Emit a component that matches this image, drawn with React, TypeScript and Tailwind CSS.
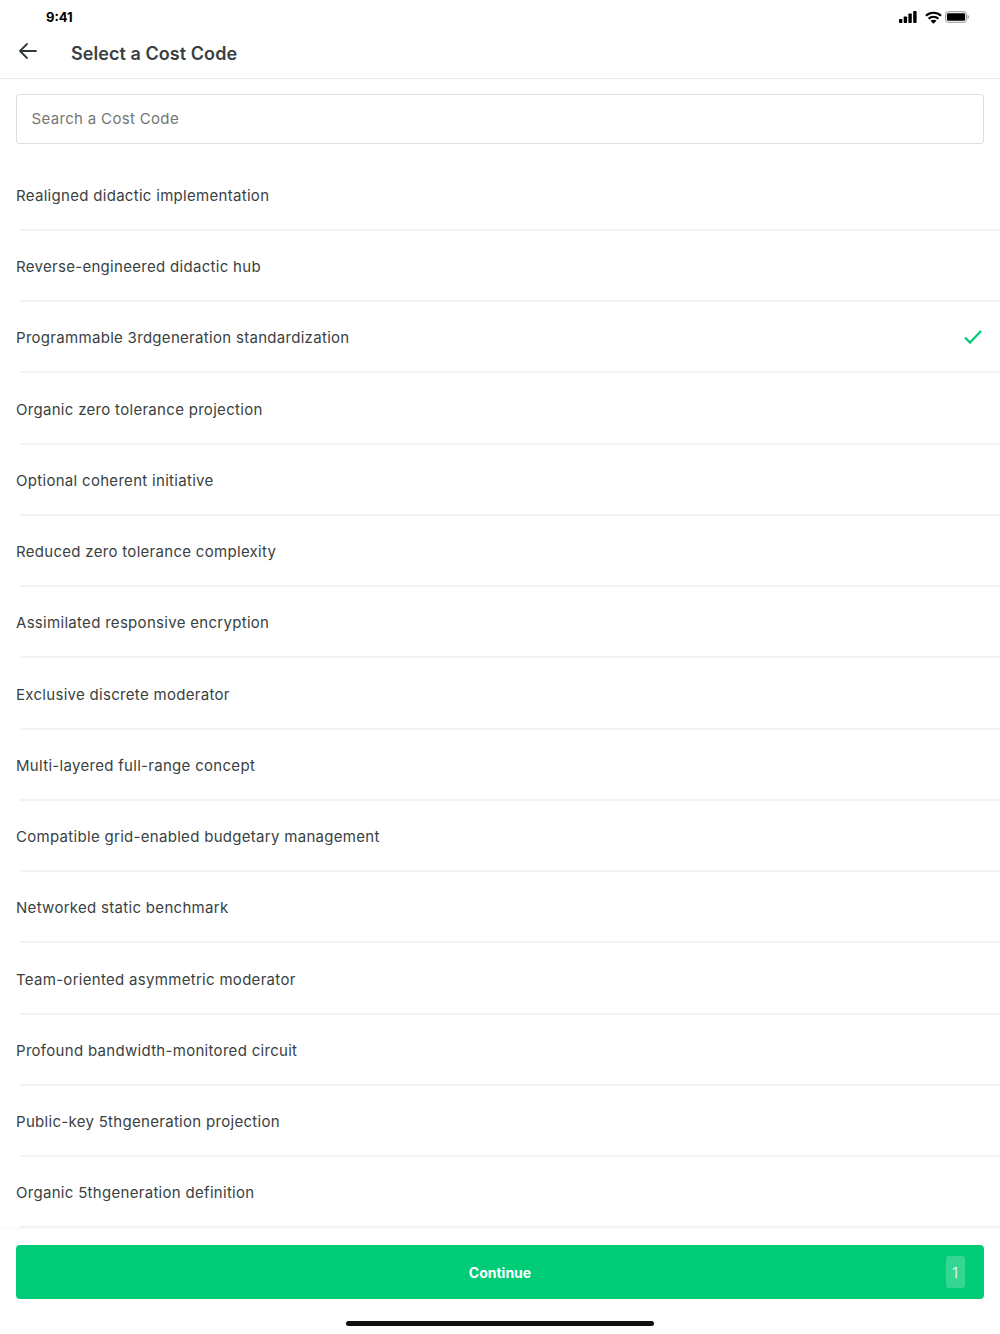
const costCodes = [
  'Realigned didactic implementation',
  'Reverse-engineered didactic hub',
  'Programmable 3rdgeneration standardization',
  'Organic zero tolerance projection',
  'Optional coherent initiative',
  'Reduced zero tolerance complexity',
  'Assimilated responsive encryption',
  'Exclusive discrete moderator',
  'Multi-layered full-range concept',
  'Compatible grid-enabled budgetary management',
  'Networked static benchmark',
  'Team-oriented asymmetric moderator',
  'Profound bandwidth-monitored circuit',
  'Public-key 5thgeneration projection',
  'Organic 5thgeneration definition',
];

const selected = 'Programmable 3rdgeneration standardization';

function StatusIcons() {
  return (
    <div className="flex items-center">
      <svg width="18" height="12" viewBox="0 0 18 12" fill="#000">
        <rect x="0" y="8" width="3.400" height="4" rx="0.8" />
        <rect x="4.700" y="5.500" width="3.400" height="6.500" rx="0.8" />
        <rect x="9.400" y="2.500" width="3.400" height="9.500" rx="0.8" />
        <rect x="14.200" y="0" width="3.400" height="12" rx="0.8" />
      </svg>
      <svg width="17" height="13" viewBox="0 0 18 13" fill="none" stroke="#000" strokeWidth="2.300" className="ml-2">
        <path d="M1 4.600C5.600 .4 12.400 .4 17 4.600" />
        <path d="M3.800 7.800C6.800 5.200 11.200 5.200 14.200 7.800" />
        <path d="M9 13 5.800 9.900c1.800-1.400 4.600-1.400 6.400 0z" fill="#000" stroke="none" />
      </svg>
      <svg width="24" height="12" viewBox="0 0 25 12" fill="none" className="ml-[3px]">
        <rect x="0.5" y="0.5" width="22" height="11" rx="2.800" stroke="#8f8f8f" />
        <rect x="2" y="2" width="19" height="8" rx="1.500" fill="#000" />
        <path d="M23.600 4v4c.8-.3 1.300-1.100 1.300-2s-.5-1.700-1.300-2z" fill="#8f8f8f" />
      </svg>
    </div>
  );
}

export default function App() {
  return (
    <div className="w-[1000px] h-[1334px] bg-white flex flex-col overflow-hidden font-['Inter',sans-serif] text-[#3a3f42]">
      <div className="h-[79px] shrink-0 border-b border-[#ececec] flex flex-col">
        <div className="h-[34px] pl-[46px] pr-[31px] flex items-center justify-between">
          <span className="text-[13px] font-bold text-black leading-none mt-[1px]">9:41</span>
          <StatusIcons />
        </div>
        <div className="flex items-center h-[38px]">
          <div className="w-[71px] pl-[18px] shrink-0 -mt-[4px]">
            <svg width="20" height="18" viewBox="0 0 20 18" fill="none" stroke="#333a3d" strokeWidth="1.800" strokeLinecap="round" strokeLinejoin="round">
              <path d="M18 9H2M9 2 2 9l7 7" />
            </svg>
          </div>
          <h1 className="text-[18px] font-semibold leading-none tracking-[0.06px] mt-[1px]">Select a Cost Code</h1>
        </div>
      </div>

      <div className="px-4 pt-[15px] shrink-0">
        <input
          placeholder="Search a Cost Code"
          className="w-full h-[49.5px] px-[14.5px] rounded-[3px] border border-[#dedede] text-[15px] tracking-[0.33px] outline-none placeholder:text-[#757575]"
        />
      </div>

      <ul className="mt-[16px] flex-1">
        {costCodes.map((code) => (
          <li key={code} className="relative h-[71.25px] pl-4 pr-[18px] flex items-center justify-between text-[15px] tracking-[0.3px]">
            <span className="mt-[2px]">{code}</span>
            {code === selected && (
              <svg width="18" height="14" viewBox="0 0 18 14" fill="none" stroke="#00cc78" strokeWidth="2.300" className="-mt-[2px]">
                <path d="M1 7.500 6 12.500 17 1" />
              </svg>
            )}
            <div className="absolute bottom-0 left-5 right-0 h-[2px] bg-[#f3f3f3]" />
          </li>
        ))}
      </ul>

      <div className="shrink-0 border-t border-[#f8f8f8] px-4 pt-4 pb-2 flex flex-col items-center">
        <button className="relative w-full h-[54px] rounded-[4px] bg-[#00cc78] text-white text-[14px] font-bold flex items-center justify-center pt-[1px]">
          Continue
          <span className="absolute right-[19px] top-[11px] w-[19px] h-[32px] rounded-[3px] bg-white/20 flex items-center justify-center text-[14px] font-normal pr-[1px] pt-[1px] text-white/80">
            1
          </span>
        </button>
        <div className="mt-[22px] w-[308px] h-[5px] rounded-full bg-[#111]" />
      </div>
    </div>
  );
}
